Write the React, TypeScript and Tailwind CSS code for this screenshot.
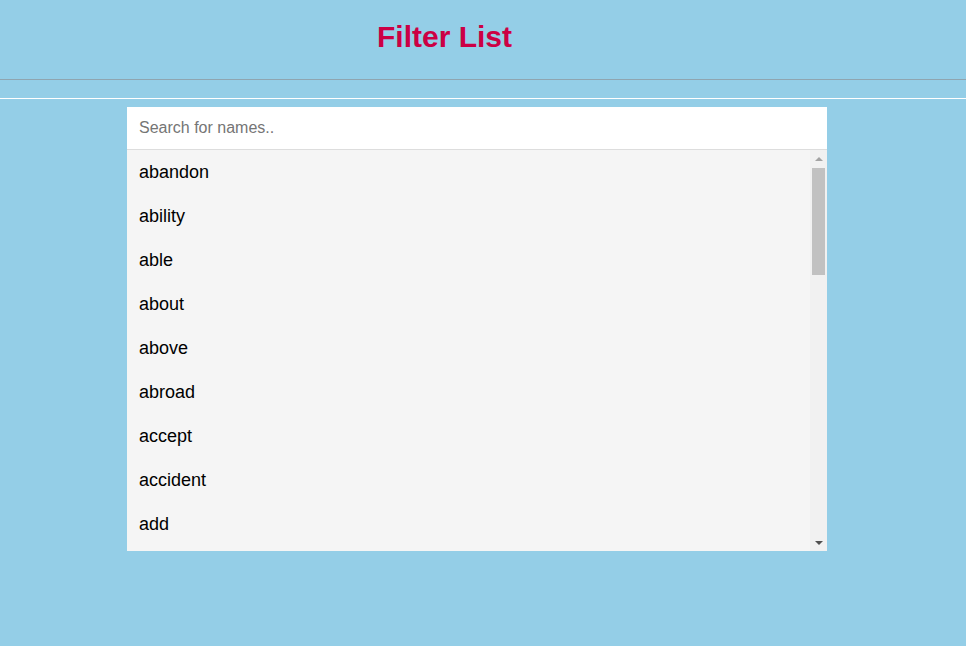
import React, { useState } from 'react';

const WORDS = [
  'abandon', 'ability', 'able', 'about', 'above', 'abroad', 'accept', 'accident', 'add',
  'address', 'administration', 'admit', 'adult', 'advance', 'advice', 'affect', 'afford',
  'afraid', 'after', 'afternoon', 'again', 'against', 'age', 'agency', 'agent', 'ago',
];

// how many rows fit in the list
const VISIBLE = 9;

export default function App() {
  const [query, setQuery] = useState('');
  const shown = WORDS.filter((w) => w.toLowerCase().includes(query.toLowerCase()));

  return (
    <div className="min-h-screen bg-[#94cee7] font-['Liberation_Sans',Arial,sans-serif]">
      <header className="h-[80px] flex justify-center pr-[77px] pt-[20px] border-b border-[#8fa5b0]">
        <h1 className="text-[30px] font-bold leading-[34px] text-[#cc0044]">Filter List</h1>
      </header>
      <div className="h-[19px] border-b border-white" />
      <main className="w-[700px] ml-[127px] mt-[8px]">
        <input
          value={query}
          onChange={(e) => setQuery(e.target.value)}
          placeholder="Search for names.."
          className="block w-full h-[43px] px-3 bg-white text-[16px] text-black placeholder:text-[#757575] border-b border-[#dddddd] outline-none"
        />
        <div className="h-[401px] flex bg-[#f5f5f5]">
          <ul className="flex-1 overflow-hidden">
            {shown.slice(0, VISIBLE).map((w) => (
              <li key={w} className="h-[44px] flex items-center px-3 text-[18px] text-black">
                {w}
              </li>
            ))}
          </ul>
          {/* scrollbar */}
          <div className="w-[17px] bg-[#f1f1f1] flex flex-col items-center">
            <div className="h-[17px] flex items-center justify-center">
              <div className="w-0 h-0 border-x-[4px] border-x-transparent border-b-[4px] border-b-[#a3a3a3]" />
            </div>
            <div className="w-[13px] h-[107px] mt-[1px] bg-[#c1c1c1]" />
            <div className="flex-1" />
            <div className="h-[17px] flex items-center justify-center">
              <div className="w-0 h-0 border-x-[4px] border-x-transparent border-t-[4px] border-t-[#505050]" />
            </div>
          </div>
        </div>
      </main>
    </div>
  );
}
